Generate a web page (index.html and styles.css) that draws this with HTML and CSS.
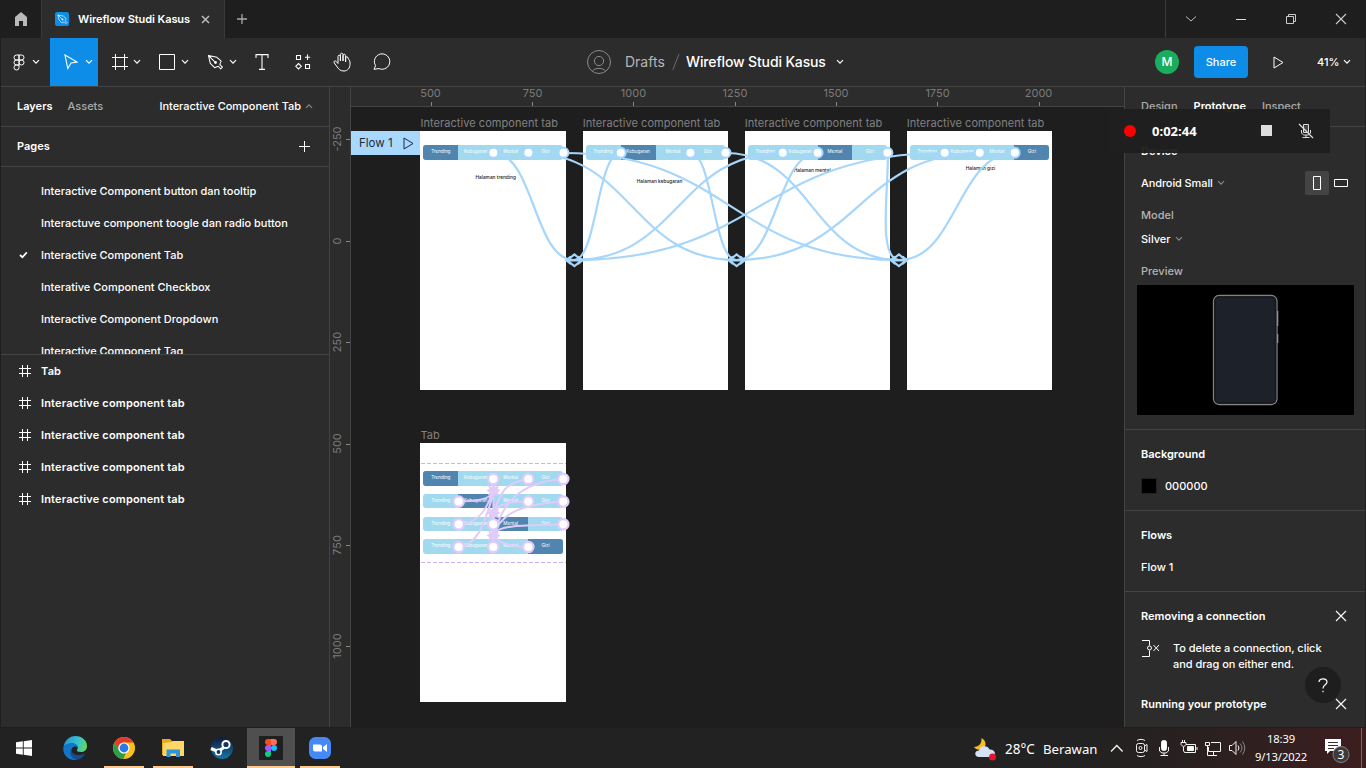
FILE: index.html
```html
<!DOCTYPE html>
<html lang="en">
<head>
<meta charset="utf-8">
<title>Wireflow Studi Kasus</title>
<link rel="stylesheet" href="styles.css">
</head>
<body>
<svg width="0" height="0" class="defs">
  <symbol id="chev" viewBox="0 0 8 6"><path d="M1 1.2L4 4.2L7 1.2" fill="none" stroke="currentColor" stroke-width="1.2"/></symbol>
  <symbol id="frame" viewBox="0 0 12 12"><path d="M3.5 0V12M8.5 0V12M0 3.5H12M0 8.5H12" fill="none" stroke="currentColor"/></symbol>
  <symbol id="close" viewBox="0 0 12 12"><path d="M1 1L11 11M11 1L1 11" fill="none" stroke="currentColor" stroke-width="1.1"/></symbol>
  <symbol id="pen" viewBox="0 0 18 18"><path d="M1.5 1.5L3.5 10L8 14.5L12 13L14.5 15.8L16.3 14L13.5 11L15 7.5L10.5 3.5Z M1.5 1.5L8 8" fill="none" stroke="currentColor" stroke-width="1.1" stroke-linejoin="round"/><circle cx="9" cy="9" r="1.5" fill="currentColor"/></symbol>
</svg>
<div class="titlebar">
  <div class="home"><svg width="14" height="14" viewBox="0 0 14 14"><path d="M7 0L13 5V14H9V9H5V14H1V5Z" fill="#b9b9b9"/></svg></div>
  <div class="filetab">
    <span class="fileicon"><svg width="11" height="11"><use href="#pen"/></svg></span>
    <span class="filename">Wireflow Studi Kasus</span>
    <svg class="tabclose" width="9" height="9" viewBox="0 0 9 9"><path d="M1 1L8 8M8 1L1 8" stroke="#bbb" stroke-width="1.5"/></svg>
  </div>
  <svg class="newtab" width="10" height="10" viewBox="0 0 10 10"><path d="M5 0V10M0 5H10" stroke="#aaa" stroke-width="1.3"/></svg>
  <div class="winbtns">
    <span><svg width="12" height="8" viewBox="0 0 12 8"><path d="M1 1.5L6 6L11 1.5" fill="none" stroke="#bbb"/></svg></span>
    <span><svg width="10" height="3" viewBox="0 0 10 3"><path d="M0 1.5H10" stroke="#ddd"/></svg></span>
    <span><svg width="10" height="10" viewBox="0 0 10 10"><path d="M.5 2.5H7.5V9.5H.5ZM2.5 2.5V.5H9.5V7.5H7.5" fill="none" stroke="#ccc"/></svg></span>
    <span><svg width="12" height="12"><use href="#close"/></svg></span>
  </div>
</div>
<div class="toolbar">
  <div class="tool menu"><svg width="12" height="17" viewBox="0 0 12 17"><path d="M6 1H3.5A2.4 2.4 0 0 0 3.5 6H6ZM6 1H8.5A2.4 2.4 0 0 1 8.5 6H6ZM6 6H3.5A2.4 2.4 0 0 0 3.5 11H6ZM6 11H3.5A2.5 2.5 0 1 0 6 13.5Z" fill="none" stroke="#fff"/><circle cx="8.5" cy="8.5" r="2.5" fill="none" stroke="#fff"/></svg><svg class="c" width="8" height="6"><use href="#chev"/></svg></div>
  <div class="tool active"><svg width="14" height="16" viewBox="0 0 14 16"><path d="M1 1L13 8L7 9L3.8 14.5Z" fill="none" stroke="#fff" stroke-width="1.1"/></svg><svg class="c" width="8" height="6"><use href="#chev"/></svg></div>
  <div class="tool fr"><svg width="16" height="16" viewBox="0 0 16 16"><path d="M3.5 0V16M12.5 0V16M0 3.5H16M0 12.5H16" stroke="#fff"/></svg><svg class="c" width="8" height="6"><use href="#chev"/></svg></div>
  <div class="tool rect"><svg width="16" height="16" viewBox="0 0 16 16"><path d="M.5 .5H15.5V15.5H.5Z" fill="none" stroke="#fff"/></svg><svg class="c" width="8" height="6"><use href="#chev"/></svg></div>
  <div class="tool rect"><svg width="17" height="17"><use href="#pen"/></svg><svg class="c" width="8" height="6"><use href="#chev"/></svg></div>
  <div class="tool single txt"><svg width="14" height="16" viewBox="0 0 14 16"><path d="M1 4V.6H13V4M7 .6V15.4M4 15.4H10" fill="none" stroke="#fff" stroke-width="1.1"/></svg></div>
  <div class="tool single res"><svg width="16" height="16" viewBox="0 0 16 16"><path d="M1.5 1.5H5.5V5.5H1.5ZM10.5 10.5H14.5V14.5H10.5ZM12.5 .5V6M10 3.3H15.2M3.5 9.5L6.3 12.3L3.5 15L.8 12.3Z" fill="none" stroke="#fff" stroke-width="1.1"/></svg></div>
  <div class="tool single hand"><svg width="18" height="20" viewBox="0 0 18 20"><path d="M5 11.5V4.5C5 2.7 7.4 2.7 7.4 4.5V9V2.6C7.4.7 10 .7 10 2.6V9V3.6C10 1.8 12.6 1.8 12.6 3.6V10V6C12.6 4.3 15 4.3 15 6C15.4 7.500 16.800 8 17 10V12.5C17 16 14.5 19 11 19C7 19 6 17.5 3.5 14L1.2 10.8C.4 9.2 2 8.2 3.3 9.5L5 11.5" fill="none" stroke="#fff" stroke-linejoin="round"/></svg></div>
  <div class="tool single hand"><svg width="18" height="18" viewBox="0 0 18 18"><path d="M1 16.3L2.6 12.7A7.7 7.7 0 1 1 6 15.6Z" fill="none" stroke="#fff" stroke-linejoin="round"/></svg></div>
  <div class="doc">
    <svg width="24" height="24" viewBox="0 0 24 24" fill="none" stroke="#8b8b8b"><circle cx="12" cy="12" r="11.5"/><circle cx="12" cy="11" r="4.6"/><path d="M5.5 21C8 17.5 16 17.5 18.5 21"/></svg>
    <span class="drafts">Drafts</span><svg class="slash" width="8" height="16" viewBox="0 0 8 16"><path d="M.8 16L7 0" stroke="#6d6d6d"/></svg><span class="docname">Wireflow Studi Kasus</span>
    <svg width="8" height="6"><use href="#chev"/></svg>
  </div>
  <div class="right">
    <span class="avatar">M</span><span class="share">Share</span>
    <svg width="11" height="13" viewBox="0 0 11 13"><path d="M1 1L10 6.5L1 12Z" fill="none" stroke="#fff"/></svg>
    <span class="pct">41%</span><svg width="8" height="6"><use href="#chev"/></svg>
  </div>
</div>
<div class="main">
  <div class="left">
    <div class="lefttabs"><b>Layers</b><span class="assets">Assets</span><span class="pagesel">Interactive Component Tab</span><svg class="up" width="8" height="6"><use href="#chev"/></svg></div>
    <div class="pageshead"><b>Pages</b><svg width="12" height="12" viewBox="0 0 12 12"><path d="M6.5 1V12M1 6.5H12" stroke="#fff"/></svg></div>
    <div class="pages">
      <div>Interactive Component button dan tooltip</div>
      <div>Interactuve component toogle dan radio button</div>
      <div><svg class="check" width="9" height="8" viewBox="0 0 9 8"><path d="M1 4L3.4 6.2L7.8 1.4" fill="none" stroke="#fff" stroke-width="1.7"/></svg>Interactive Component Tab</div>
      <div>Interative Component Checkbox</div>
      <div>Interactive Component Dropdown</div>
      <div>Interactive Component Tag</div>
    </div>
    <div class="layers">
      <div><svg width="12" height="12"><use href="#frame"/></svg>Tab</div>
      <div><svg width="12" height="12"><use href="#frame"/></svg>Interactive component tab</div>
      <div><svg width="12" height="12"><use href="#frame"/></svg>Interactive component tab</div>
      <div><svg width="12" height="12"><use href="#frame"/></svg>Interactive component tab</div>
      <div><svg width="12" height="12"><use href="#frame"/></svg>Interactive component tab</div>
    </div>
  </div>
  <div class="vruler">
    <svg width="20" height="640" viewBox="330 87 20 640">
      <path d="M346 139.5h4M346 241.5h4M346 342.5h4M346 444.5h4M346 545.5h4M346 646.5h4" stroke="#888"/>
      <g class="rl"><text transform="translate(341 139)rotate(-90)">-250</text><text transform="translate(341 241)rotate(-90)">0</text><text transform="translate(341 342)rotate(-90)">250</text><text transform="translate(341 443.500)rotate(-90)">500</text><text transform="translate(341 545)rotate(-90)">750</text><text transform="translate(341 646)rotate(-90)">1000</text></g>
    </svg>
  </div>
  <div class="center">
    <div class="hruler"><svg width="773" height="19" viewBox="351 87 773 19">
      <path d="M431.500 102v4M532.500 102v4M633.500 102v4M735.500 102v4M836.500 102v4M937.500 102v4M1039.500 102v4" stroke="#888"/>
      <g class="rl"><text x="430.500" y="97">500</text><text x="532.500" y="97">750</text><text x="633.500" y="97">1000</text><text x="735" y="97">1250</text><text x="836" y="97">1500</text><text x="937.500" y="97">1750</text><text x="1038.500" y="97">2000</text></g></svg></div>
    <div class="canvas">
      <div class="flow">Flow 1<svg width="11" height="13" viewBox="0 0 11 13"><path d="M1 1L10 6.500L1 12Z" fill="none" stroke="#1e2a38"/></svg></div>
      <div class="artboard a1"><span class="label">Interactive component tab</span><div class="tabs"><i class="on">Trending</i><i>Kebugaran</i><i>Mental</i><i>Gizi</i></div><p>Halaman trending</p></div>
      <div class="artboard a2"><span class="label">Interactive component tab</span><div class="tabs"><i>Trending</i><i class="on">Kebugaran</i><i>Mental</i><i>Gizi</i></div><p>Halaman kebugaran</p></div>
      <div class="artboard a3"><span class="label">Interactive component tab</span><div class="tabs"><i>Trending</i><i>Kebugaran</i><i class="on">Mental</i><i>Gizi</i></div><p>Halaman mental</p></div>
      <div class="artboard a4"><span class="label">Interactive component tab</span><div class="tabs"><i>Trending</i><i>Kebugaran</i><i>Mental</i><i class="on">Gizi</i></div><p>Halaman gizi</p></div>
      <div class="artboard a5"><span class="label">Tab</span><div class="variants">
        <div class="tabs"><i class="on">Trending</i><i>Kebugaran</i><i>Mental</i><i>Gizi</i></div>
        <div class="tabs"><i>Trending</i><i class="on">Kebugaran</i><i>Mental</i><i>Gizi</i></div>
        <div class="tabs"><i>Trending</i><i>Kebugaran</i><i class="on">Mental</i><i>Gizi</i></div>
        <div class="tabs"><i>Trending</i><i>Kebugaran</i><i>Mental</i><i class="on">Gizi</i></div>
      </div></div>
      <svg class="wires" width="773" height="620" viewBox="351 107 773 620">
        <g fill="none" stroke="#a6d6fb" stroke-width="2.200">
          <path d="M493.500 153C534 153 534 260 574 260M528.500 153C632 153 632 260 736.500 260M563.500 153C731 153 731 260 899 260"/>
          <path d="M620.500 153C597 153 597 260 574 260M690.500 153C713 153 713 260 736.500 260M725.500 153C812 153 812 260 899 260"/>
          <path d="M783 153C678 153 678 260 574 260M818 153C777 153 777 260 736.500 260M888 153C888 195 878 258 899 260"/>
          <path d="M945 153C759 153 759 260 574 260M980 153C858 153 858 260 736.500 260M1015 153C957 153 957 260 899 260"/>
          <g id="dia"><path d="M567 260.300L574.400 254.500L581.800 260.300L574.400 266.200ZM566 260.300H583M578 256.500L582.500 260.300L578 264M570.800 256.500L566.300 260.300L570.800 264" stroke-width="2.200"/></g>
          <use href="#dia" x="162.200"/><use href="#dia" x="324.500"/>
        </g>
        <g fill="#fff" stroke="#a6d6fb" stroke-width="2">
          <circle cx="493.400" cy="152.700" r="5"/><circle cx="528.400" cy="152.700" r="5"/><circle cx="563.500" cy="152.700" r="5"/>
          <circle cx="620.700" cy="152.700" r="5"/><circle cx="690.400" cy="152.700" r="5"/><circle cx="725.500" cy="152.700" r="5"/>
          <circle cx="782.700" cy="152.700" r="5"/><circle cx="817.600" cy="152.700" r="5"/><circle cx="887.400" cy="152.700" r="5"/>
          <circle cx="944.700" cy="152.700" r="5"/><circle cx="979.700" cy="152.700" r="5"/><circle cx="1014.700" cy="152.700" r="5"/>
        </g>
        <path d="M421 463.500H566M421 562.500H566" stroke="#cdb2f8" stroke-dasharray="4 2"/>
        <g fill="none" stroke="#e1cbfb" stroke-width="2">
          <path d="M458.700 501.600C473 501.500 488 500 493.400 493M458.700 524.300C476 524 487 511 492 492M458.700 547C479 545 485 520 493.400 494"/>
          <path d="M493.400 479V547M528.300 479C506 482 500 492 494 513M563.300 479C520 482 502 503 494 535M528.300 501.600C512 502 499 503 494 511M563.300 501.600C525 504 500 512 494 535M563.300 524.300C528 526 503 524 494 533M528.300 547C512 547 497 543 494 535"/>
        </g>
        <g fill="#e1cbfb"><path id="star" d="M493.400 484L495 487L499 485.500L497.700 488.800L500.500 490.500L497.700 492.300L499 495.800L495.300 494.500L493.400 497.500L491.600 494.500L488 495.800L489.300 492.300L486.500 490.500L489.300 488.800L488 485.500L491.800 487Z"/><use href="#star" y="22.500"/><use href="#star" y="45"/></g>
        <g fill="#fff" stroke="#e1cbfb" stroke-width="2.200">
          <circle cx="493.300" cy="479" r="5.200"/><circle cx="528.300" cy="479" r="5.200"/><circle cx="563.300" cy="479" r="5.200"/>
          <circle cx="458.700" cy="501.600" r="5.200"/><circle cx="528.300" cy="501.600" r="5.200"/><circle cx="563.300" cy="501.600" r="5.200"/>
          <circle cx="458.700" cy="524.300" r="5.200"/><circle cx="493.300" cy="524.300" r="5.200"/><circle cx="563.300" cy="524.300" r="5.200"/>
          <circle cx="458.700" cy="547" r="5.200"/><circle cx="493.300" cy="547" r="5.200"/><circle cx="528.300" cy="547" r="5.200"/>
        </g>
      </svg>
    </div>
  </div>
  <div class="rightp">
    <div class="ptabs"><span>Design</span><b>Prototype</b><span>Inspect</span></div>
    <div class="device">
      <b class="row h">Device</b>
      <div class="row wide"><span class="as">Android Small</span><svg class="g" width="8" height="6"><use href="#chev"/></svg><span class="port"><svg width="8" height="14" viewBox="0 0 8 14"><path d="M.5 .5H7.500V13.500H.5Z" fill="none" stroke="#fff"/></svg></span><svg class="land" width="14" height="8" viewBox="0 0 14 8"><path d="M.5 .5H13.500V7.500H.5Z" fill="none" stroke="#fff"/></svg></div>
      <div class="row dim">Model</div>
      <div class="row silver">Silver<svg class="g" width="8" height="6"><use href="#chev"/></svg></div>
      <div class="row dim prev">Preview</div>
      <div class="preview"><svg width="68" height="112" viewBox="0 0 68 112"><path d="M65.500 17V32M65.500 40V49" stroke="#aaa" stroke-width="1.500"/><rect x="1.500" y="1.500" width="63.500" height="109" rx="5.500" fill="#1d212a" stroke="#85837f" stroke-width="1.300"/><rect x="3" y="3" width="60.500" height="106" rx="4" fill="none" stroke="#17191d" stroke-width="1.500"/></svg></div>
    </div>
    <div class="sec"><b>Background</b><div class="color"><i></i>000000</div></div>
    <div class="sec"><b>Flows</b><div>Flow 1</div></div>
    <div class="tips">
      <div class="tiphead"><b>Removing a connection</b><svg width="12" height="12"><use href="#close"/></svg></div>
      <div class="tip"><svg width="20" height="18" viewBox="0 0 20 18" fill="none" stroke="#fff"><path d="M1 1.500H8.500V6.500M8.500 11.500V17.500H1"/><circle cx="8.500" cy="9" r="2"/><path d="M12.500 6L18 12M18 6L12.500 12"/></svg><p>To delete a connection, click<br>and drag on either end.</p></div>
      <div class="tiphead second"><b>Running your prototype</b><svg width="12" height="12"><use href="#close"/></svg></div>
    </div>
    <div class="help"><svg width="10" height="15" viewBox="0 0 10 15"><path d="M1 4C1 -.3 9 -.3 9 4C9 7 5 6.500 5 10.500M5 12.700V14.200" fill="none" stroke="#fff" stroke-width="1.200"/></svg></div>
  </div>
</div>
<div class="recorder"><i class="dot"></i><b>0:02:44</b><i class="stop"></i>
  <svg width="16" height="16" viewBox="0 0 16 16" fill="none" stroke="#ddd"><path d="M5.500 1.500H10.500V9.500H5.500ZM3.500 7V10L5.500 12H10.500L12.500 10V7M8 12V14.500M4.500 14.500H11.500"/><path d="M7 2.500V8.500M9 2.500V8.500" stroke="#777"/><path d="M1 1L15 15" stroke-width="1.300"/></svg></div>
<div class="taskbar">
  <div class="t win"><svg width="16" height="16" viewBox="0 0 16 16"><path d="M0 2.300L6.800 1.300V7.500H0ZM7.700 1.200L16 0V7.500H7.700ZM0 8.400H6.800V14.700L0 13.700ZM7.700 8.400H16V16L7.700 14.800Z" fill="#fff"/></svg></div>
  <div class="t edge"><svg width="24" height="24" viewBox="0 0 24 24"><defs><linearGradient id="eg" x1="0" x2="1" y1=".3" y2=".5"><stop offset="0" stop-color="#2795d8"/><stop offset=".6" stop-color="#35c1cf"/><stop offset="1" stop-color="#63d75a"/></linearGradient></defs><path d="M.5 11C1.500 4.500 6.500 0 12.500 0C19 0 24 4.500 24 10C24 14 21 16 18 16C15 16 13.500 15 14 14C16 11.500 14 7.500 9.500 7.500C5 7.500 1.500 9.500 .5 11Z" fill="url(#eg)"/><path d="M.2 13C0 9.500 4 7.300 8.500 7.300C12.500 7.300 14.500 9 14.500 11.500C11 8.500 7.500 12.500 8.300 16.500C9 20.500 12 23 15 23.500C7 25.500 .5 20.500 .2 13Z" fill="#1275c9"/><path d="M8.500 13.500C8.500 18.500 15 21 22 17.200C20.500 21 17.500 23.500 14 23.700C8 22.500 5.500 16.500 8.500 13.500Z" fill="#164c91"/></svg></div>
  <div class="t u"><svg width="24" height="24" viewBox="0 0 24 24"><circle cx="12" cy="12" r="11" fill="#fbc116"/><path d="M2.500 6.500A11 11 0 0 1 21.500 6.500H12A5.500 5.500 0 0 0 7 14.500Z" fill="#e33b2e"/><path d="M2.500 6.500L7.300 14.700A5.500 5.500 0 0 0 14 17L11.300 23A11 11 0 0 1 2.500 6.500Z" fill="#2c9e49"/><circle cx="12" cy="12" r="5.600" fill="#fff"/><circle cx="12" cy="12" r="4.400" fill="#2c78e8"/></svg></div>
  <div class="t u"><svg width="22" height="20" viewBox="0 0 22 20"><path d="M0 1H8L10 3H21V17H0Z" fill="#e8a820"/><path d="M1 5L10 4L11 3H22V18H1Z" fill="#fdd868"/><path d="M4.500 19V11.500H18V19H14V15.500H8.500V19Z" fill="#3294d4"/></svg></div>
  <div class="t steam"><svg width="24" height="24" viewBox="0 0 24 24"><defs><linearGradient id="sg" x2="0" y2="1"><stop stop-color="#101a38"/><stop offset="1" stop-color="#1277ac"/></linearGradient></defs><circle cx="12" cy="12" r="11" fill="url(#sg)"/><path d="M1 12.500L8 15.500L13 12L15 8.500" fill="none" stroke="#fff" stroke-width="3.200"/><circle cx="16" cy="8.500" r="3.600" fill="#173457" stroke="#fff" stroke-width="2"/><circle cx="8.500" cy="16" r="2.700" fill="#173457" stroke="#fff" stroke-width="1.600"/></svg></div>
  <div class="t fig"><svg width="24" height="24" viewBox="0 0 24 24"><rect width="24" height="24" rx="1" fill="#1f1f1f"/><path d="M12 3H9A3 3 0 0 0 9 9H12Z" fill="#f24e1e"/><path d="M12 3H15A3 3 0 0 1 15 9H12Z" fill="#ff7262"/><path d="M12 9H9A3 3 0 0 0 9 15H12Z" fill="#a259ff"/><circle cx="15" cy="12" r="3" fill="#1abcfe"/><path d="M12 15H9A3 3 0 1 0 12 18Z" fill="#0acf83"/></svg></div>
  <div class="t u zoom"><svg width="24" height="24" viewBox="0 0 24 24"><rect x="1" y="1" width="22" height="22" rx="6.500" fill="#4489f5"/><path d="M5 8.500H12A2 2 0 0 1 14 10.500V15.500H7A2 2 0 0 1 5 13.500ZM15 11L19 8V16L15 13Z" fill="#fff"/></svg></div>
  <div class="weather"><svg width="24" height="24" viewBox="0 0 24 24"><path d="M8.500 1C14 4 14 11 8 12.500C5 13 2 12 1 10C6 10 9 6 8.500 1Z" fill="#f7bd22"/><path d="M6 20C1 20 1 13.500 6 13.500C7 8 15 8 16.500 12.500C23 12 24 20 18 20Z" fill="#d5e2f5"/><circle cx="19.500" cy="20" r="3.500" fill="#e81230"/></svg><span>28°C</span><span class="w2">Berawan</span></div>
  <svg class="tray" width="142" height="20" viewBox="1108 738 142 20" fill="none" stroke="#f4f4f4">
    <path d="M1111 751.500L1116.800 745.500L1122.600 751.500" stroke-width="1.300"/>
    <rect x="1136.500" y="743.500" width="8" height="9" rx="2"/><circle cx="1140.500" cy="748" r="1.500"/><path d="M1144.500 746L1147 744.500V751.500L1144.500 750M1137 740.500C1139 739 1143 739 1145 740.500M1137 755.500C1139 757 1143 757 1145 755.500"/>
    <rect x="1161.500" y="740.500" width="5" height="10" rx="2" fill="#fff"/><path d="M1159.500 747V751L1162 753H1166L1168.500 751V747M1164 753V755.500M1160.500 755.500H1168"/>
    <path d="M1186 744.500H1195.500V752.500H1184.500V751.500M1197 747V750M1181 742.500H1186V744.500L1183.500 747L1181 744.500ZM1182.500 740V742M1184.500 740V742M1183.500 747V751.500"/><path d="M1187.500 746.500H1193.500V750.500H1187.500Z" fill="#fff"/>
    <path d="M1211 742.500H1220.500V751.500H1208.500V747M1213.500 752V755M1210 755.500H1217M1205.500 742.500H1209.500V745.500H1205.500ZM1207.500 746V755.500H1210"/>
    <path d="M1229.500 745.500H1232L1236 741.500V754.500L1232 750.500H1229.500ZM1238 745.500Q1240 748 1238 750.500"/><path d="M1240 743.500Q1244 748 1240 752.500M1242.500 741.500Q1247 748 1242.500 754.500" stroke="#8b8b8b"/>
  </svg>
  <div class="clock"><span>18:39</span><span>9/13/2022</span></div>
  <svg class="note" width="26" height="26" viewBox="0 0 26 26"><path d="M1 2H17V14H6L3 17V14H1Z" fill="#fff"/><path d="M4 5.500H14M4 8.500H14M4 11.500H10" stroke="#333"/><circle cx="17" cy="17.500" r="8" fill="#3c3a3a" stroke="#858383"/><text x="17" y="22" text-anchor="middle">3</text></svg>
  <i class="peek"></i>
</div>
</body>
</html>
```
FILE: styles.css
```css
*{box-sizing:border-box}
body{margin:0;width:1366px;height:768px;overflow:hidden;display:flex;flex-direction:column;background:#1e1e1e;color:#fff;font:500 11px/16px Inter,sans-serif;position:relative}
svg{display:block;flex:none}
b{font-weight:600}
i{font-style:normal}
.defs{position:absolute}
.titlebar{height:38px;display:flex;align-items:center;padding-left:1px;background:#1e1e1e}
.home{width:40px;height:38px;display:flex;align-items:center;justify-content:center}
.filetab{width:184px;height:38px;background:#2c2c2c;border-left:1px solid #3a3a3a;border-right:1px solid #3a3a3a;display:flex;align-items:center;padding-left:13px}
.fileicon{width:14px;height:14px;border-radius:2px;background:#0d8de8;display:flex;align-items:center;justify-content:center}
.filename{margin-left:9px;width:123px;font-weight:600;font-size:11px;letter-spacing:-.08px;white-space:nowrap}
.newtab{margin-left:12px}
.winbtns{margin-left:auto;display:flex;border-left:1px solid #3c3c3c;height:38px}
.winbtns span{width:50px;display:flex;align-items:center;justify-content:center;color:#ccc}
.toolbar{height:49px;display:flex;background:#2c2c2c;border-bottom:1px solid #444;margin:0 1px}
.tool{width:48px;height:48px;display:flex;align-items:center;padding-left:14px}
.tool.menu{width:49px;padding-left:12px}
.tool .c{margin-left:auto;margin-right:5px}
.tool.menu .c{margin-right:10px}
.tool.active{background:#0d8de8}
.tool.rect{padding-left:13px}
.tool.single{width:40px;padding:0;justify-content:center}
.tool.txt{padding-right:1px}
.tool.res{padding-left:1px}
.tool.hand{padding-right:1px}
.doc{margin-left:185px;display:flex;align-items:center;font-size:14px;font-weight:400}
.drafts{color:#b5b5b5;margin-left:14px;width:40px}
.slash{margin:0 6px 0 7px}
.docname{width:142px;margin-right:8px;white-space:nowrap;font-weight:500;letter-spacing:-.14px}
.right{margin-left:auto;display:flex;align-items:center;padding-right:14px}
.avatar{width:24px;height:24px;border-radius:50%;background:#1bac5d;text-align:center;line-height:24px;font-size:12px;margin-right:15px}
.share{width:54px;height:32px;border-radius:4px;background:#0d8de8;text-align:center;line-height:32px;margin-right:25px;font-size:11px}
.pct{margin-left:33px;width:26px;white-space:nowrap;font-size:11px}
.main{height:641px;display:flex;padding:0 1px 1px;background:#1e1e1e}
.left{width:329px;background:#2c2c2c;border-right:1px solid #444}
.lefttabs{height:40px;border-bottom:1px solid #444;display:flex;align-items:center;padding:0 16px 2px}
.assets{color:#aaa;margin-left:15px}
.pagesel{margin-left:auto;letter-spacing:-.03px}
.up{transform:rotate(180deg);color:#888;margin-left:4px}
.pageshead{height:40px;border-bottom:1px solid #444;display:flex;align-items:center;justify-content:space-between;padding:0 19px 2px 16px}
.pages{height:188px;border-bottom:1px solid #444;padding-top:8px;overflow:hidden}
.pages div{height:32px;padding-left:40px;line-height:32px;position:relative}
.check{position:absolute;left:18px;top:12px}
.layers div{height:32px;display:flex;align-items:center;padding-left:18px;gap:10px;font-weight:600;letter-spacing:.17px}
.vruler{width:21px;background:#2c2c2c;border-right:1px solid #444}
.rl{fill:#7b7b7b;font-size:11px;text-anchor:middle;font-weight:400}
.center{width:773px}
.hruler{height:20px;background:#2c2c2c;border-bottom:1px solid #444}
.canvas{height:620px;position:relative;overflow:hidden;background:#1e1e1e}
.flow{position:absolute;left:0;top:24px;width:69px;height:24px;background:#a8d8fd;color:#1e2a38;display:flex;align-items:center;justify-content:space-between;padding:0 6px 0 8px;font-size:11.500px;font-weight:400}
.artboard{position:absolute;top:24px;width:145.500px;height:259px;background:#fff;padding:14.300px 0 0 3px}
.a1{left:69.400px}.a2{left:231.700px}.a3{left:393.700px}.a4{left:555.700px}.a5{left:69.400px;top:335.500px}
.label{position:absolute;left:0;top:-16px;color:#818181;font-weight:400;font-size:11px;letter-spacing:.06px;white-space:nowrap}
.tabs{width:139.700px;height:14.500px;border-radius:3px;overflow:hidden;display:flex;background:#a1d9ef}
.tabs i{flex:1;text-align:center;font-size:4.600px;line-height:14.500px;font-weight:400}
.tabs .on{background:#5085b0}
.artboard p{margin:14px 0 0;color:#222;font-size:4.800px;line-height:6px;padding-left:52px}
.a2 p{margin-top:18px;padding-left:51px}
.a3 p{margin-top:7px;padding-left:46px}
.a4 p{margin-top:5px;padding-left:56px}
.variants{padding-top:14.500px;display:grid;gap:8.150px}
.wires{position:absolute;left:0;top:0}
.rightp{width:241px;background:#2c2c2c;border-left:1px solid #444;position:relative;overflow:hidden}
.ptabs{height:40px;border-bottom:1px solid #444;display:flex;align-items:center;padding:0 0 2px 16px;gap:16px;color:#aaa}
.ptabs b{color:#fff}
.device{height:303px;border-bottom:1px solid #444;padding-top:16px}
.row{display:flex;align-items:center;height:16px;padding-left:16px}
.row.wide{height:48px}
.as{width:72px;white-space:nowrap;letter-spacing:-.1px}
.g{color:#8b8b8b;margin-left:4px}
.port{margin-left:80px;width:24px;height:24px;background:#444;border-radius:2px;display:flex;align-items:center;justify-content:center}
.land{margin-left:5px}
.dim{color:#b4b4b4}
.row.silver{height:32px}
.row.prev{margin-top:8px}
.preview{margin:6px 0 0 12px;width:217px;height:130px;background:#000;border-radius:1px;display:flex;align-items:center;justify-content:center}
.sec{height:81px;border-bottom:1px solid #444;padding:16px 16px 0;display:grid;grid-template-rows:16px 16px;gap:16px}
.color{display:flex;align-items:center;gap:8px;font-size:11px}
.color i{width:16px;height:16px;background:#000;border:1px solid #222}
.tips{padding:16px 18px 0 16px}
.tiphead{display:flex;justify-content:space-between;align-items:center;height:16px}
.tip{display:flex;margin-top:16px;height:32px;gap:12px}
.tip svg{margin-top:-1px}
.tip p{margin:0;white-space:nowrap;letter-spacing:-.05px}
.tiphead.second{margin-top:24px}
.help{position:absolute;left:180px;top:580px;width:36px;height:36px;border-radius:50%;background:#1e1e1e;display:flex;align-items:center;justify-content:center}
.recorder{position:absolute;left:1110px;top:109px;width:220px;height:44px;background:rgba(31,31,31,.96);display:flex;align-items:center;padding-left:14px}
.dot{width:12px;height:12px;border-radius:50%;background:#fe0000}
.recorder b{font:700 13px/16px "Open Sans",sans-serif;margin-left:16px;width:109px}
.stop{width:11px;height:11px;background:#ddd;margin-top:-2px}
.recorder svg{margin-left:26px}
.taskbar{height:40px;display:flex;align-items:center;background:linear-gradient(90deg,#222 0,#222 1080px,#2b2020 1210px,#3d1e1f 1366px);font-family:"Noto Sans",sans-serif;font-weight:400}
.t{width:40px;height:40px;display:flex;align-items:center;justify-content:center}
.t.win{width:48px}
.edge{margin-left:7px}
.u{border-bottom:2px solid #fec98c;padding-top:2px;margin-left:9px}
.steam{margin-left:9px}
.t.fig{width:48px;margin-left:5px;background:#4f4f4f;border-bottom:2px solid #fec98c;padding-top:2px}
.t.zoom{margin-left:5px}
.weather{margin-left:633px;display:flex;align-items:center;font-size:13.500px;width:135px;white-space:nowrap;padding-top:1px}
.weather span{margin-left:8px;width:29px}
.weather .w2{margin-left:9px;font-size:13.200px}
.clock{width:62px;display:flex;flex-direction:column;align-items:center;font-size:11.200px;line-height:18px;letter-spacing:-.1px}
.note{margin-left:12px;margin-top:4px}
.note text{font-size:12px;fill:#fff}
.peek{margin-left:auto;margin-right:4px;width:1px;height:40px;background:#756565}
```
